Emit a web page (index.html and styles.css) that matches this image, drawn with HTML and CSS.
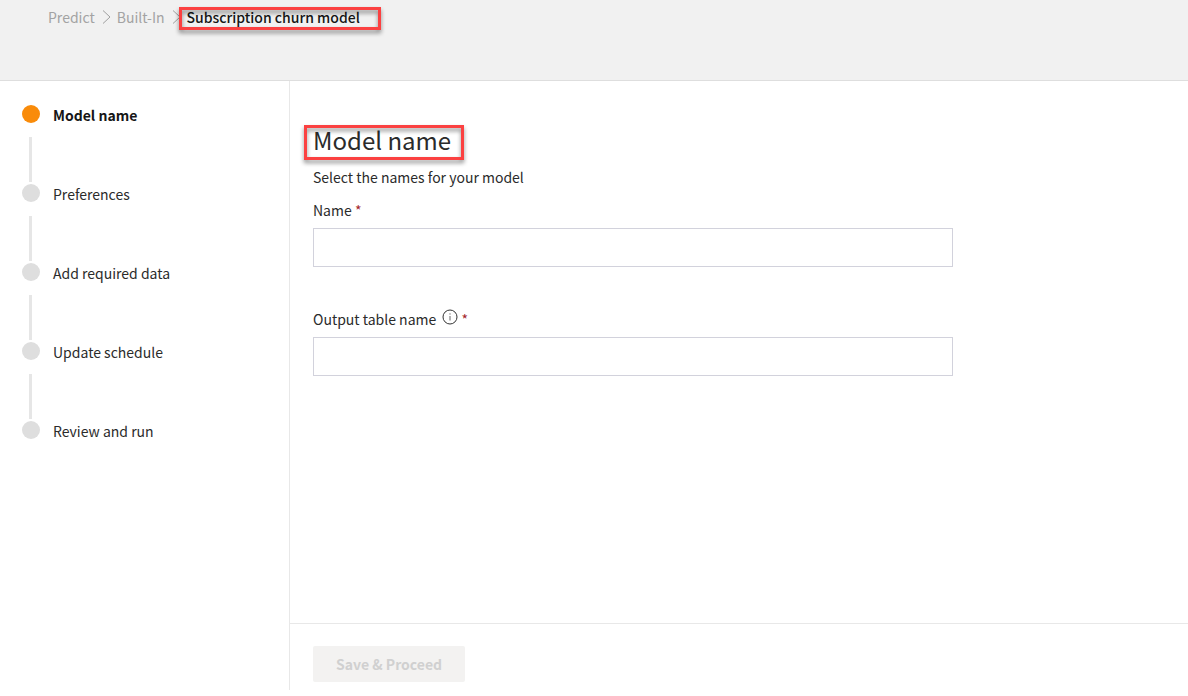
FILE: index.html
```html
<!DOCTYPE html>
<html lang="en">
<head>
<meta charset="utf-8">
<meta name="viewport" content="width=device-width, initial-scale=1">
<title>Subscription churn model</title>
<link rel="stylesheet" href="styles.css">
</head>
<body>
<div class="app">
  <header class="topbar">
    <nav class="crumbs" aria-label="Breadcrumb">
      <a class="crumb" href="#">Predict</a>
      <svg class="chevron" viewBox="0 0 9 16" aria-hidden="true"><path d="M1 1.5 8 8 1 14.5"/></svg>
      <a class="crumb" href="#">Built-In</a>
      <svg class="chevron" viewBox="0 0 9 16" aria-hidden="true"><path d="M1 1.5 8 8 1 14.5"/></svg>
      <span class="crumb-current marked" aria-current="page">Subscription churn model</span>
    </nav>
  </header>
  <div class="body">
    <aside class="sidebar">
      <ol class="steps">
        <li class="step step-active" aria-current="step"><span class="marker"></span><span class="step-name">Model name</span></li>
        <li class="step"><span class="marker"></span><span class="step-name">Preferences</span></li>
        <li class="step"><span class="marker"></span><span class="step-name">Add required data</span></li>
        <li class="step"><span class="marker"></span><span class="step-name">Update schedule</span></li>
        <li class="step"><span class="marker"></span><span class="step-name">Review and run</span></li>
      </ol>
    </aside>
    <main class="main">
      <form class="form" id="model-form">
        <h1 class="title marked">Model name</h1>
        <p class="intro">Select the names for your model</p>
        <div class="field">
          <label class="label" for="name">Name <span class="required">*</span></label>
          <input class="input" id="name" type="text" required>
        </div>
        <div class="field">
          <label class="label" for="table">Output table name
            <svg class="info" viewBox="0 0 16 16" aria-hidden="true"><circle cx="8" cy="8" r="7"/><path class="info-mark" d="M8 7v4.5M8 4.3v1.3"/></svg>
            <span class="required">*</span></label>
          <input class="input" id="table" type="text" required>
        </div>
      </form>
      <footer class="footer">
        <button class="button" type="submit" form="model-form" disabled>Save &amp; Proceed</button>
      </footer>
    </main>
  </div>
</div>
</body>
</html>
```
FILE: styles.css
```css
* {
  box-sizing: border-box;
}

body {
  margin: 0;
  background: #fff;
  color: #2b2b2b;
  font-family: "Noto Sans CJK SC", "Noto Sans", sans-serif;
  font-size: 14px;
  line-height: 20px;
}

.app {
  display: flex;
  flex-direction: column;
  min-height: 100vh;
  padding-bottom: 6px;
}

.topbar {
  min-height: 81px;
  padding: 7px 48px;
  background: #f1f1f1;
  border-bottom: 1px solid #dedede;
}

.crumbs {
  display: flex;
  align-items: center;
  gap: 6px;
}

.crumb {
  color: #a3a3a3;
  text-decoration: none;
}

.crumb-current {
  color: #161616;
  font-weight: 500;
}

.chevron {
  width: 9px;
  height: 16px;
  margin-left: 1px;
  fill: none;
  stroke: #a0a0a0;
}

/* Red call-out frame around a piece of text */
.marked {
  position: relative;
}

.marked::after {
  content: "";
  position: absolute;
  inset: 0 -21px -3px -8px;
  border: 3px solid #fb4141;
  filter: drop-shadow(0 3px 2px rgba(0, 0, 0, 0.45));
  pointer-events: none;
}

.body {
  flex: 1;
  display: grid;
  grid-template-columns: 290px 1fr;
}

.sidebar {
  padding: 24px 22px;
  border-right: 1px solid #e8e8e8;
}

.steps {
  margin: 0;
  padding: 0;
  list-style: none;
}

.step {
  display: grid;
  grid-template-columns: 18px 1fr;
  grid-template-rows: 20px 45px;
  column-gap: 13px;
  row-gap: 12px;
  padding-bottom: 2px;
}

.step:not(:last-child)::after {
  content: "";
  width: 3px;
  margin-left: 7px;
  background: #e6e6e6;
}

.marker {
  width: 18px;
  height: 18px;
  border-radius: 50%;
  background: #dedede;
}

.step-active .marker {
  background: #f98b0a;
}

.step-active .step-name {
  color: #161616;
  font-weight: 700;
}

.main {
  display: flex;
  flex-direction: column;
}

.form {
  flex: 1;
  padding: 44px 23px 24px;
}

.title {
  width: fit-content;
  margin: 0;
  font-size: 24px;
  font-weight: 400;
  line-height: 30px;
}

.title::after {
  inset: 0 -13px -5px -9px;
}

.intro {
  margin: 12px 0 13px;
}

.field {
  display: flex;
  flex-direction: column;
  gap: 8px;
  margin-bottom: 42px;
}

.required {
  color: #a4262c;
}

.info {
  width: 16px;
  height: 16px;
  margin-left: 3px;
  fill: none;
  stroke: #333;
}

.info-mark {
  stroke: #666;
}

.input {
  width: 100%;
  max-width: 640px;
  height: 39px;
  padding: 0 12px;
  border: 1px solid #d2d2dc;
  background: #fff;
  font: inherit;
}

.footer {
  padding: 22px 23px 8px;
  border-top: 1px solid #e8e8e8;
}

.button {
  height: 36px;
  padding: 0 23px;
  border: 0;
  border-radius: 2px;
  background: #f3f2f1;
  color: #d0d0d0;
  font: inherit;
  font-weight: 700;
}
```
